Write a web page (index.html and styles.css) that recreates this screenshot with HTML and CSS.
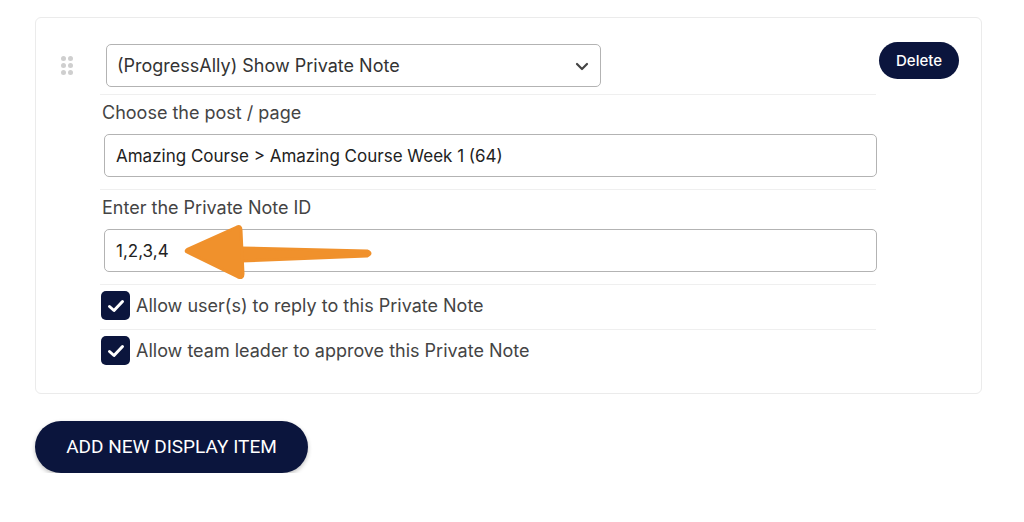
FILE: index.html
```html
<!DOCTYPE html>
<html>
<head>
<meta charset="utf-8">
<link rel="stylesheet" href="styles.css">
</head>
<body>
<div class="page">
  <div class="card">
    <div class="handle">
      <span></span><span></span><span></span><span></span><span></span><span></span>
    </div>
    <div class="content">
      <div class="row row-select">
        <div class="select">
          <span>(ProgressAlly) Show Private Note</span>
          <svg class="chev" width="14" height="9" viewBox="0 0 14 9"><path d="M2 2 L7 7 L12 2" fill="none" stroke="#444" stroke-width="2.2" stroke-linecap="round" stroke-linejoin="round"/></svg>
        </div>
      </div>
      <div class="row">
        <div class="label">Choose the post / page</div>
        <div class="input">Amazing Course &gt; Amazing Course Week 1 (64)</div>
      </div>
      <div class="row">
        <div class="label">Enter the Private Note ID</div>
        <div class="input">1,2,3,4</div>
      </div>
      <div class="row row-check">
        <span class="check"><svg width="18" height="14" viewBox="0 0 18 14"><path d="M2.5 7.5 L7 11.5 L15.5 2.5" fill="none" stroke="#fff" stroke-width="3" stroke-linecap="round" stroke-linejoin="round"/></svg></span>
        <span class="check-text">Allow user(s) to reply to this Private Note</span>
      </div>
      <div class="row row-check last">
        <span class="check"><svg width="18" height="14" viewBox="0 0 18 14"><path d="M2.5 7.5 L7 11.5 L15.5 2.5" fill="none" stroke="#fff" stroke-width="3" stroke-linecap="round" stroke-linejoin="round"/></svg></span>
        <span class="check-text">Allow team leader to approve this Private Note</span>
      </div>
    </div>
    <div class="actions">
      <button class="delete">Delete</button>
    </div>
  </div>
  <button class="add">ADD NEW DISPLAY ITEM</button>
  <svg class="arrow" width="200" height="60" viewBox="0 0 200 60">
    <path d="M58 24 L184 27 Q190 29.5 184 32 L58 37 Z" fill="#f0912c" stroke="#f0912c" stroke-width="3" stroke-linejoin="round"/>
    <path d="M4 28 Q2 27 5 25 L54 3 Q58 1.5 58 6 L60 50 Q60 55 55 53 Z" fill="#f0912c" stroke="#f0912c" stroke-width="3" stroke-linejoin="round"/>
  </svg>
</div>
</body>
</html>
```
FILE: styles.css
```css
html, body {
  margin: 0;
  padding: 0;
  background: #fff;
}
.page {
  position: relative;
  padding: 17px 0 0 35px;
  width: 947px;
  font-family: Inter, "Liberation Sans", sans-serif;
}
.card {
  display: flex;
  border: 1px solid #ebebeb;
  border-radius: 6px;
  padding: 26px 0 28px 0;
  background: #fff;
}
.handle {
  width: 12px;
  margin: 12px 0 0 25px;
  display: grid;
  grid-template-columns: 5px 5px;
  grid-auto-rows: 5px;
  column-gap: 2px;
  row-gap: 2px;
  align-self: flex-start;
}
.handle span {
  width: 5px;
  height: 5px;
  border-radius: 50%;
  background: #cfcfcf;
}
.content {
  width: 776px;
  margin-left: 27px;
}
.row {
  border-bottom: 1px solid #efefef;
  padding: 7px 0 12px 0;
}
.row.last {
  border-bottom: none;
  padding-bottom: 0;
}
.row-select {
  padding: 0 0 7px 0;
}
.select {
  margin-left: 6px;
  height: 41px;
  border: 1px solid #b3b3b3;
  border-radius: 5px;
  display: flex;
  align-items: center;
  justify-content: space-between;
  padding: 0 11px 0 10px;
  box-sizing: content-box;
  width: 472px;
  font-size: 18px;
  color: #333;
}
.chev {
  margin-top: 2px;
}
.label {
  padding-left: 2px;
  height: 22px;
  line-height: 22px;
  font-size: 18px;
  color: #444;
}
.input {
  margin: 10px 0 0 4px;
  width: 773px;
  box-sizing: border-box;
  height: 43px;
  border: 1px solid #b3b3b3;
  border-radius: 5px;
  display: flex;
  align-items: center;
  padding-left: 11px;
  font-size: 17px;
  color: #222;
}
.row-check {
  display: flex;
  align-items: center;
  padding: 6px 0 9px 1px;
}
.check {
  width: 29px;
  height: 29px;
  border-radius: 5px;
  background: #0b153d;
  display: flex;
  align-items: center;
  justify-content: center;
}
.check-text {
  margin-left: 6px;
  font-size: 18px;
  color: #444;
}
.actions {
  margin-left: 3px;
  margin-top: -2px;
}
.delete {
  width: 80px;
  height: 37px;
  border: none;
  border-radius: 19px;
  background: #0b153d;
  color: #fff;
  font-family: Inter, "Liberation Sans", sans-serif;
  font-size: 15px;
  font-weight: 500;
  padding: 0;
}
.add {
  display: block;
  margin-top: 27px;
  width: 273px;
  height: 52px;
  border: none;
  border-radius: 26px;
  background: #0b153d;
  color: #fff;
  font-family: Roboto, "Liberation Sans", sans-serif;
  font-size: 19px;
  font-weight: 400;
  letter-spacing: 0;
  box-shadow: 0 2px 4px rgba(0, 0, 0, 0.25);
  padding: 0 0 1px 0;
}
.arrow {
  position: absolute;
  left: 183px;
  top: 224px;
}
```
